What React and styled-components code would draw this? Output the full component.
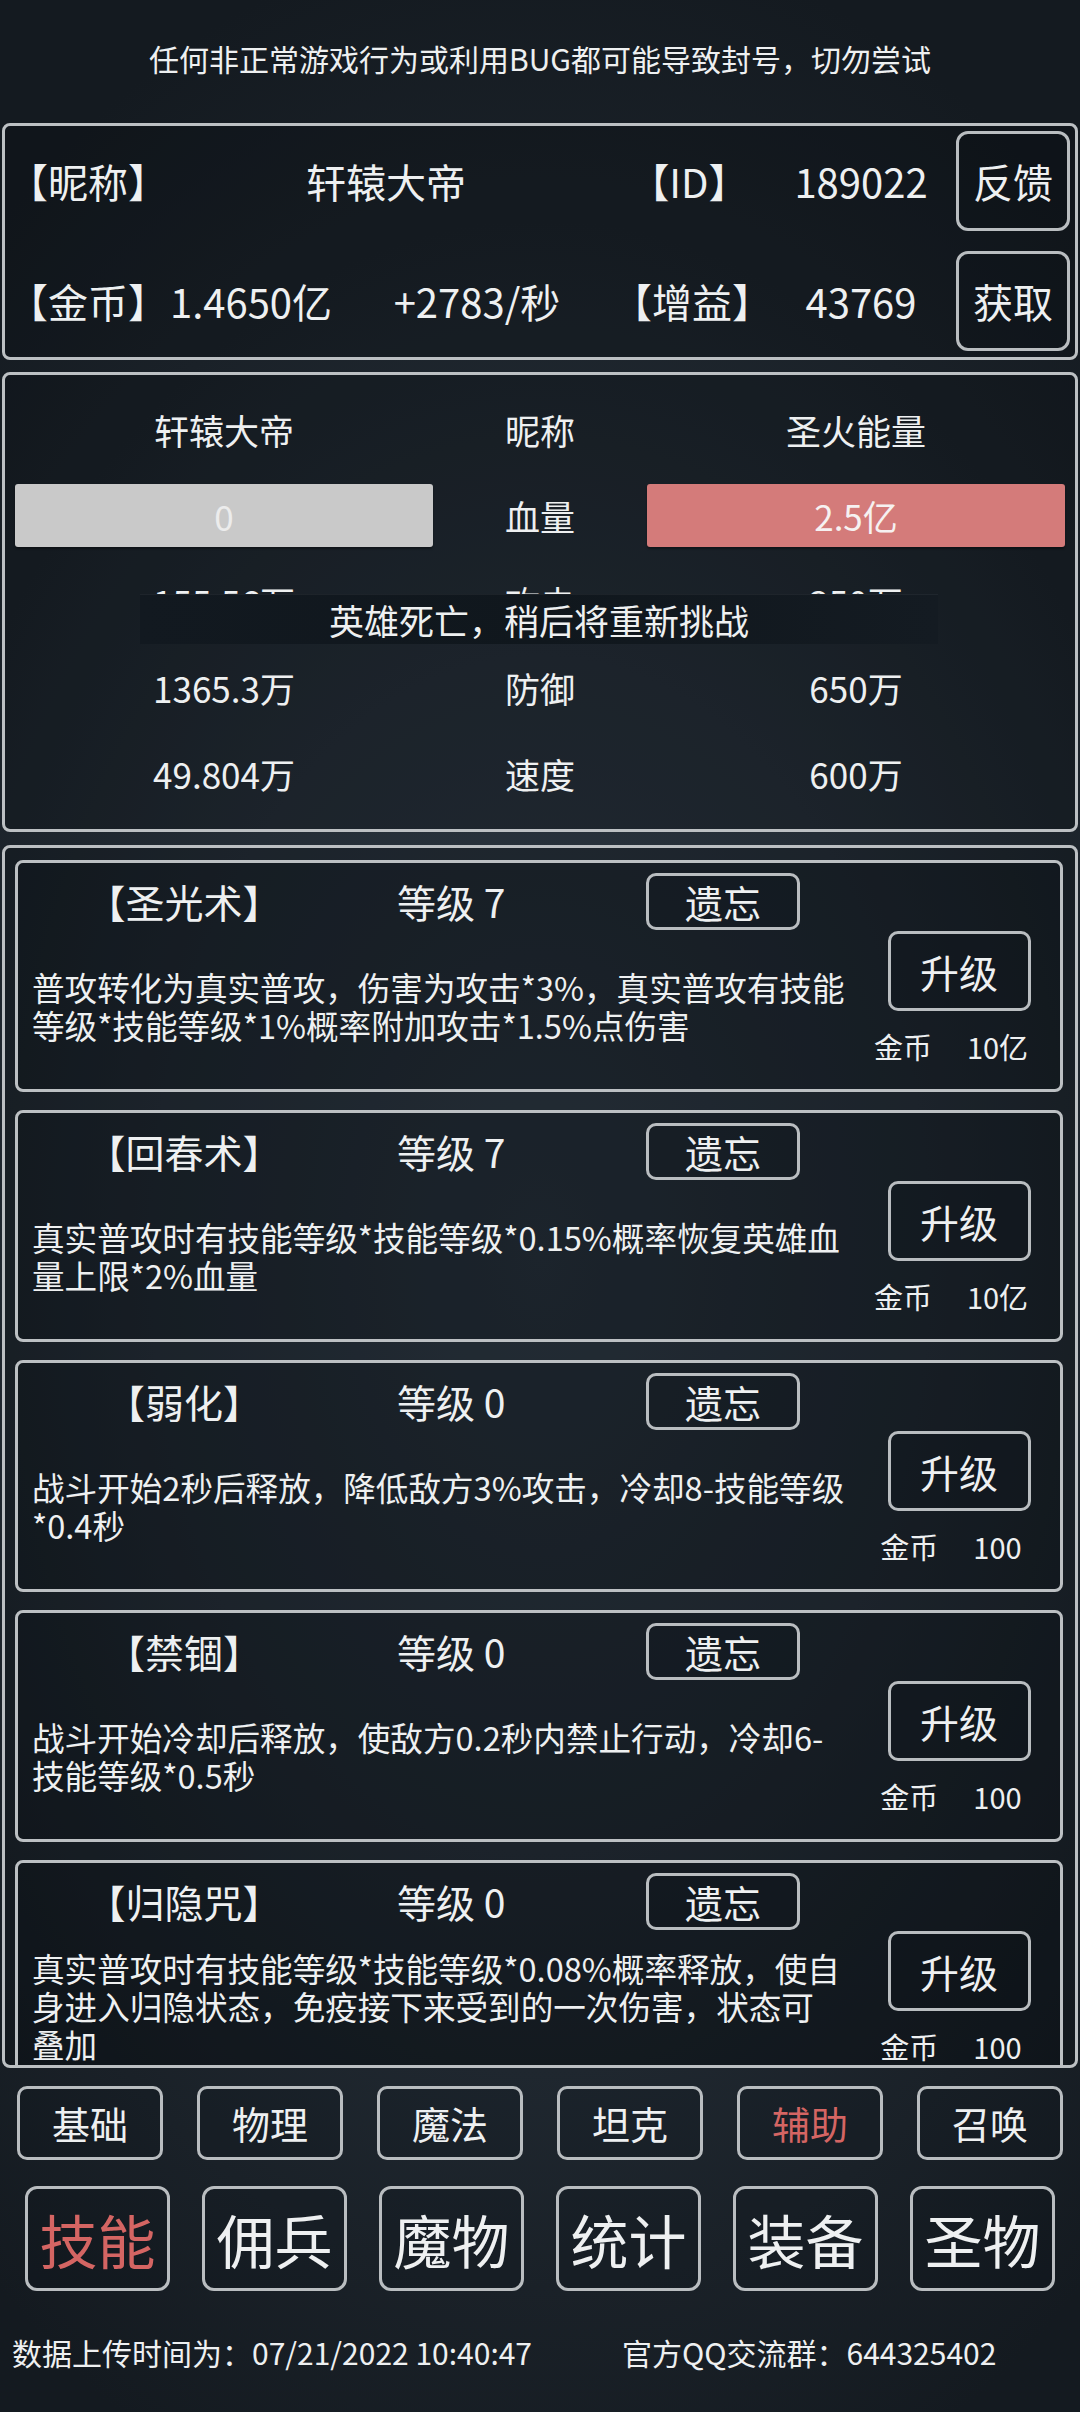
import styled, { createGlobalStyle } from "styled-components";

const GlobalStyle = createGlobalStyle`
  html, body {
    margin: 0;
    padding: 0;
  }
  body {
    background: #151c23;
    font-family: "Noto Sans CJK SC", "Noto Sans", sans-serif;
    color: #eef0f1;
  }
  * {
    box-sizing: border-box;
  }
`;

const Page = styled.div`
  width: 1080px;
  height: 2412px;
  overflow: hidden;
  display: flex;
  flex-direction: column;
  background: radial-gradient(
    ellipse 80% 55% at 50% 52%,
    #2e3944 0%,
    #242d36 45%,
    #1a2128 78%,
    #141a20 100%
  );
`;

const Notice = styled.div`
  height: 116px;
  margin-bottom: 7px;
  display: flex;
  align-items: center;
  justify-content: center;
  font-size: 30px;
  line-height: 1;
`;

const Panel = styled.section`
  position: relative;
  margin: ${(p) => p.$mt || 0}px 2px 0;
  height: ${(p) => p.$h}px;
  border: 3px solid #bcc0c3;
  border-radius: 8px;
  background: rgba(6, 10, 14, 0.28);
  flex-shrink: 0;
`;

/* ---------- player info ---------- */

const InfoBody = styled.div`
  padding: 5px 5px 0 3px;
  display: flex;
  flex-direction: column;
  gap: 20px;
`;

const InfoRow = styled.div`
  display: grid;
  grid-template-columns: 152px 182px 270px 154px 190px 114px;
  align-items: center;
  height: 100px;
  font-size: 40px;
  line-height: 1;
`;

const Cell = styled.div`
  text-align: ${(p) => p.$align || "center"};
  grid-column: ${(p) => (p.$span ? `span ${p.$span}` : "auto")};
  white-space: nowrap;
`;

const OutlineButton = styled.button`
  display: flex;
  align-items: center;
  justify-content: center;
  width: ${(p) => p.$w}px;
  height: ${(p) => p.$h}px;
  padding: 0;
  border: 3px solid #b9bdc0;
  border-radius: ${(p) => p.$r || 10}px;
  background: rgba(10, 14, 18, 0.15);
  color: ${(p) => p.$color || "#eef0f1"};
  font-family: inherit;
  font-size: ${(p) => p.$fs}px;
  line-height: 1;
  white-space: nowrap;
`;

/* ---------- battle ---------- */

const BattleGrid = styled.div`
  padding: 11px 10px 0;
  display: grid;
  grid-template-columns: 1fr 214px 1fr;
  grid-auto-rows: 86px;
  align-items: center;
  font-size: 35px;
  line-height: 1;
  text-align: center;
`;

const HpBar = styled.div`
  height: 63px;
  display: flex;
  align-items: center;
  justify-content: center;
  border-radius: 3px;
  background: ${(p) => p.$bg};
  color: ${(p) => p.$color};
  box-shadow: 0 2px 2px rgba(0, 0, 0, 0.35);
`;

const DeathBanner = styled.div`
  position: absolute;
  left: 135px;
  top: 219px;
  width: 798px;
  height: 50px;
  display: flex;
  align-items: center;
  justify-content: center;
  font-size: 35px;
  line-height: 1;
  background: linear-gradient(90deg, #121920 0%, #10171d 50%, #141b22 100%);
  box-shadow: inset 0 1px 0 rgba(255, 255, 255, 0.05);
`;

/* ---------- skills ---------- */

const SkillList = styled.div`
  height: 100%;
  overflow: hidden;
  padding: 12px 12px 0 10px;
  display: flex;
  flex-direction: column;
  gap: 18px;
`;

const SkillCard = styled.div`
  flex-shrink: 0;
  height: 232px;
  border: 3px solid #bcc0c3;
  border-radius: 8px;
  background: rgba(6, 10, 14, 0.22);
  display: grid;
  grid-template-columns: 1fr 154px;
  padding-right: 24px;
`;

const SkillMain = styled.div`
  display: flex;
  flex-direction: column;
  min-width: 0;
`;

const SkillHead = styled.div`
  height: 77px;
  display: grid;
  grid-template-columns: 332px 296px 154px;
  align-items: center;
  font-size: 39px;
  line-height: 1;
`;

const SkillName = styled.div`
  text-align: center;
  white-space: nowrap;
`;

const SkillLevel = styled.div`
  padding-left: 47px;
  white-space: nowrap;
`;

const SkillDesc = styled.div`
  height: 132px;
  display: flex;
  align-items: center;
  padding-left: 14px;
  font-size: 32.6px;
  line-height: 38px;
  white-space: pre;
`;

const SkillSide = styled.div`
  padding-top: 68px;
  display: flex;
  flex-direction: column;
  align-items: center;
`;

const Cost = styled.div`
  margin: 15px 16px 0 0;
  height: 40px;
  display: flex;
  align-items: center;
  gap: 35px;
  font-size: 29px;
  line-height: 1;
  white-space: nowrap;
`;

/* ---------- tabs ---------- */

const TabRow = styled.nav`
  margin-top: ${(p) => p.$mt}px;
  padding: 0 ${(p) => p.$px}px;
  display: flex;
  justify-content: space-between;
  flex-shrink: 0;
`;

const Footer = styled.footer`
  flex: 1;
  display: grid;
  grid-template-columns: 610px 1fr;
  align-items: center;
  padding-left: 12px;
  font-size: 30px;
  line-height: 1;
  white-space: nowrap;
`;

const RED = "#d46563";

const skills = [
  {
    name: "【圣光术】",
    level: 7,
    cost: "10亿",
    desc: "普攻转化为真实普攻，伤害为攻击*3%，真实普攻有技能\n等级*技能等级*1%概率附加攻击*1.5%点伤害",
  },
  {
    name: "【回春术】",
    level: 7,
    cost: "10亿",
    desc: "真实普攻时有技能等级*技能等级*0.15%概率恢复英雄血\n量上限*2%血量",
  },
  {
    name: "【弱化】",
    level: 0,
    cost: "100",
    desc: "战斗开始2秒后释放，降低敌方3%攻击，冷却8-技能等级\n*0.4秒",
  },
  {
    name: "【禁锢】",
    level: 0,
    cost: "100",
    desc: "战斗开始冷却后释放，使敌方0.2秒内禁止行动，冷却6-\n技能等级*0.5秒",
  },
  {
    name: "【归隐咒】",
    level: 0,
    cost: "100",
    desc: "真实普攻时有技能等级*技能等级*0.08%概率释放，使自\n身进入归隐状态，免疫接下来受到的一次伤害，状态可\n叠加",
  },
];

const stats = [
  ["155.56万", "攻击", "350万"],
  ["1365.3万", "防御", "650万"],
  ["49.804万", "速度", "600万"],
];

const categories = ["基础", "物理", "魔法", "坦克", "辅助", "召唤"];
const mainTabs = ["技能", "佣兵", "魔物", "统计", "装备", "圣物"];

function SkillItem({ skill }) {
  return (
    <SkillCard>
      <SkillMain>
        <SkillHead>
          <SkillName>{skill.name}</SkillName>
          <SkillLevel>等级 {skill.level}</SkillLevel>
          <OutlineButton $w={154} $h={57} $fs={38} $r={10}>
            遗忘
          </OutlineButton>
        </SkillHead>
        <SkillDesc>{skill.desc}</SkillDesc>
      </SkillMain>
      <SkillSide>
        <OutlineButton $w={143} $h={80} $fs={39} $r={10}>
          升级
        </OutlineButton>
        <Cost>
          <span>金币</span>
          <span>{skill.cost}</span>
        </Cost>
      </SkillSide>
    </SkillCard>
  );
}

export default function App() {
  return (
    <>
      <GlobalStyle />
      <Page>
        <Notice>任何非正常游戏行为或利用BUG都可能导致封号，切勿尝试</Notice>

        <Panel $h={237}>
          <InfoBody>
            <InfoRow>
              <Cell $align="left">【昵称】</Cell>
              <Cell $span={2}>轩辕大帝</Cell>
              <Cell>【ID】</Cell>
              <Cell>189022</Cell>
              <OutlineButton $w={114} $h={100} $fs={40} $r={12}>
                反馈
              </OutlineButton>
            </InfoRow>
            <InfoRow>
              <Cell $align="left">【金币】</Cell>
              <Cell>1.4650亿</Cell>
              <Cell>+2783/秒</Cell>
              <Cell>【增益】</Cell>
              <Cell>43769</Cell>
              <OutlineButton $w={114} $h={100} $fs={40} $r={12}>
                获取
              </OutlineButton>
            </InfoRow>
          </InfoBody>
        </Panel>

        <Panel $h={460} $mt={12}>
          <BattleGrid>
            <div>轩辕大帝</div>
            <div>昵称</div>
            <div>圣火能量</div>
            <HpBar $bg="#c9c9c9" $color="#ececec">
              0
            </HpBar>
            <div>血量</div>
            <HpBar $bg="#d47b7a" $color="#f6f1f1">
              2.5亿
            </HpBar>
            {stats.map((row) =>
              row.map((v, i) => <div key={row[1] + i}>{v}</div>)
            )}
          </BattleGrid>
          <DeathBanner>英雄死亡，稍后将重新挑战</DeathBanner>
        </Panel>

        <Panel $h={1223} $mt={13}>
          <SkillList>
            {skills.map((s) => (
              <SkillItem key={s.name} skill={s} />
            ))}
          </SkillList>
        </Panel>

        <TabRow $mt={18} $px={17}>
          {categories.map((c) => (
            <OutlineButton
              key={c}
              $w={146}
              $h={74}
              $fs={38}
              $r={10}
              $color={c === "辅助" ? RED : undefined}
            >
              {c}
            </OutlineButton>
          ))}
        </TabRow>

        <TabRow $mt={26} $px={25}>
          {mainTabs.map((t) => (
            <OutlineButton
              key={t}
              $w={145}
              $h={105}
              $fs={58}
              $r={12}
              $color={t === "技能" ? RED : undefined}
            >
              {t}
            </OutlineButton>
          ))}
        </TabRow>

        <Footer>
          <span>数据上传时间为：07/21/2022 10:40:47</span>
          <span>官方QQ交流群：644325402</span>
        </Footer>
      </Page>
    </>
  );
}
